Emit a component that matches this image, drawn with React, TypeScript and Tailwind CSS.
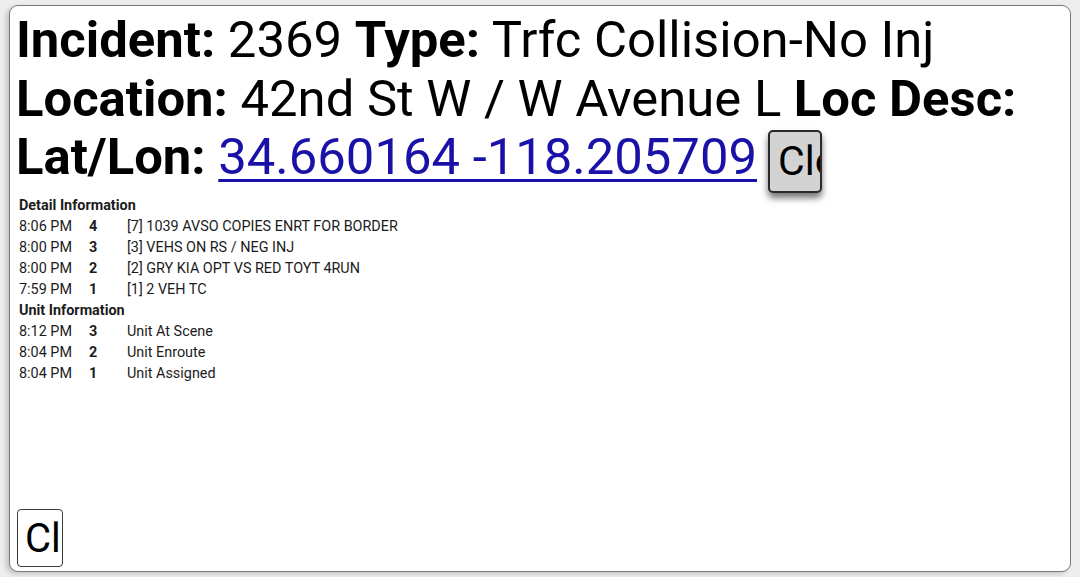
const details = [
  { time: '8:06 PM', n: 4, text: '[7] 1039 AVSO COPIES ENRT FOR BORDER' },
  { time: '8:00 PM', n: 3, text: '[3] VEHS ON RS / NEG INJ' },
  { time: '8:00 PM', n: 2, text: '[2] GRY KIA OPT VS RED TOYT 4RUN' },
  { time: '7:59 PM', n: 1, text: '[1] 2 VEH TC' },
];

const units = [
  { time: '8:12 PM', n: 3, text: 'Unit At Scene' },
  { time: '8:04 PM', n: 2, text: 'Unit Enroute' },
  { time: '8:04 PM', n: 1, text: 'Unit Assigned' },
];

function Rows({ rows }: { rows: typeof details }) {
  return (
    <>
      {rows.map((r, i) => (
        <div key={i} className="grid grid-cols-[70px_38px_1fr] leading-[21px]">
          <span>{r.time}</span>
          <span className="font-bold">{r.n}</span>
          <span>{r.text}</span>
        </div>
      ))}
    </>
  );
}

export default function App() {
  return (
    <div
      className="h-[577px] w-[1080px] overflow-hidden bg-[#eeeeee] pt-[5px] pr-[9px] pb-[5px] pl-[9px] text-black"
      style={{ fontFamily: 'Roboto, "Noto Sans", sans-serif' }}
    >
      <div className="flex h-full flex-col justify-between rounded-[9px] border-[1.5px] border-[#7a7a7a] bg-white px-[6px] pt-[5px] pb-[4px] shadow-[-3px_2px_5px_rgba(0,0,0,0.18)]">
        <div>
          <div className="text-[50.8px] leading-[58.5px]">
            <div>
              <b>Incident:</b> 2369 <b>Type:</b> Trfc Collision-No Inj
            </div>
            <div>
              <b>Location:</b> 42nd St W / W Avenue L <b>Loc Desc:</b>
            </div>
            <div className="flex items-end">
              <span>
                <b>Lat/Lon:</b>{' '}
                <a href="#" className="text-[#1a12a8] underline decoration-[3px] underline-offset-[5px]">
                  34.660164 -118.205709
                </a>
              </span>
              <button className="ml-[11px] mb-[-6px] h-[63px] w-[54px] overflow-hidden whitespace-nowrap rounded-[5px] border-2 border-[#2a2a2a] bg-[#d3d3d3] pl-[8px] text-left text-[41px] leading-[47px] shadow-[0_5px_7px_rgba(0,0,0,0.55)]">
                Close
              </button>
            </div>
          </div>
          <div className="mt-[8px] pl-[3px] text-[14.4px] text-[#1b1b1b]">
            <div className="font-bold leading-[21px]">Detail Information</div>
            <Rows rows={details} />
            <div className="font-bold leading-[21px]">Unit Information</div>
            <Rows rows={units} />
          </div>
        </div>
        <div>
          <button className="ml-[1px] h-[58px] w-[46px] overflow-hidden whitespace-nowrap rounded-[4px] border border-[#3a3a3a] bg-white pl-[7px] text-left text-[40px] leading-[47px]">
            Close
          </button>
        </div>
      </div>
    </div>
  );
}
